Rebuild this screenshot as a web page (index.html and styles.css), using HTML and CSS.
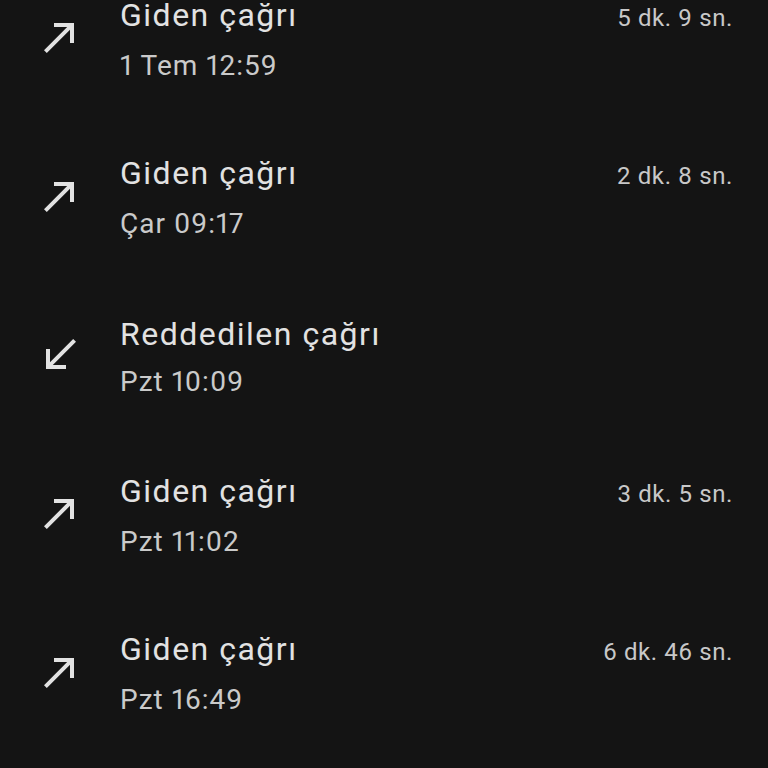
FILE: index.html
```html
<!DOCTYPE html>
<html lang="tr">
<head>
<meta charset="utf-8">
<title>Arama geçmişi</title>
<link rel="stylesheet" href="styles.css">
</head>
<body>
<ul class="calls">
  <li class="call">
    <svg class="icon" viewBox="0 0 24 24"><path d="M9 5v2h6.59L4 18.59 5.41 20 17 8.41V15h2V5z"/></svg>
    <div class="text">
      <div class="top"><span class="title">Giden çağrı</span><span class="dur">5 dk. 9 sn.</span></div>
      <div class="sub">1 Tem 12:59</div>
    </div>
  </li>
  <li class="call">
    <svg class="icon" viewBox="0 0 24 24"><path d="M9 5v2h6.59L4 18.59 5.41 20 17 8.41V15h2V5z"/></svg>
    <div class="text">
      <div class="top"><span class="title">Giden çağrı</span><span class="dur">2 dk. 8 sn.</span></div>
      <div class="sub">Çar 09:17</div>
    </div>
  </li>
  <li class="call">
    <svg class="icon" viewBox="0 0 24 24"><path d="M20 5.41L18.59 4 7 15.59V9H5v10h10v-2H8.41z"/></svg>
    <div class="text">
      <div class="top"><span class="title">Reddedilen çağrı</span></div>
      <div class="sub">Pzt 10:09</div>
    </div>
  </li>
  <li class="call">
    <svg class="icon" viewBox="0 0 24 24"><path d="M9 5v2h6.59L4 18.59 5.41 20 17 8.41V15h2V5z"/></svg>
    <div class="text">
      <div class="top"><span class="title">Giden çağrı</span><span class="dur">3 dk. 5 sn.</span></div>
      <div class="sub">Pzt 11:02</div>
    </div>
  </li>
  <li class="call">
    <svg class="icon" viewBox="0 0 24 24"><path d="M9 5v2h6.59L4 18.59 5.41 20 17 8.41V15h2V5z"/></svg>
    <div class="text">
      <div class="top"><span class="title">Giden çağrı</span><span class="dur">6 dk. 46 sn.</span></div>
      <div class="sub">Pzt 16:49</div>
    </div>
  </li>
</ul>
</body>
</html>
```
FILE: styles.css
```css
html, body {
  margin: 0;
  padding: 0;
  background: #141414;
  height: 100%;
  overflow: hidden;
}
body {
  font-family: Roboto, "Noto Sans", sans-serif;
  color: #e2e2e2;
  font-variant-numeric: proportional-nums;
}
.calls {
  list-style: none;
  margin: -42px 0 0 0;
  padding: 0;
}
.call {
  height: 158.67px;
  display: flex;
  align-items: center;
  padding: 0 35px 0 36px;
  box-sizing: border-box;
}
.icon {
  width: 48px;
  height: 48px;
  flex: none;
  fill: #e2e2e2;
  margin-right: 36px;
}
.text {
  flex: 1;
  padding-top: 6px;
}
.top {
  display: flex;
  align-items: baseline;
  line-height: 48px;
}
.title {
  font-size: 32px;
  letter-spacing: 1.5px;
  color: #e2e2e2;
}
.dur {
  margin-left: auto;
  font-size: 24px;
  letter-spacing: 0.6px;
  color: #c8c8c8;
}
.sub {
  font-size: 28px;
  line-height: 48px;
  letter-spacing: 1px;
  color: #cacaca;
}
```
